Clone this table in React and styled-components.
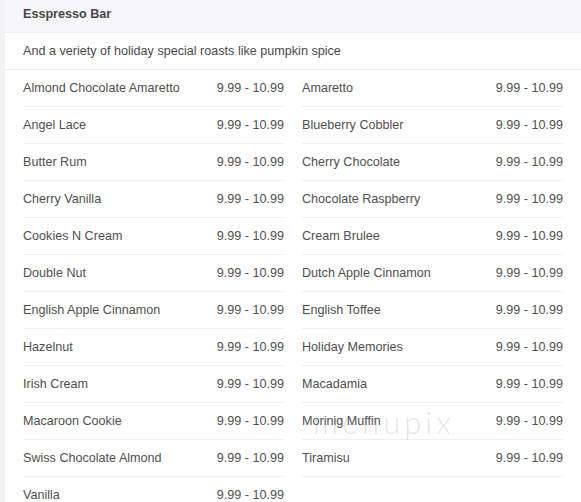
import React from "react";
import styled, { createGlobalStyle } from "styled-components";

const GlobalStyle = createGlobalStyle`
  body {
    margin: 0;
    background: #ffffff;
    font-family: "Liberation Sans", Arial, sans-serif;
  }
`;

const Page = styled.div`
  position: relative;
  border-left: 5px solid #f2f2f4;
  min-height: 502px;
  background: #fff;
`;

const Header = styled.div`
  background: #f6f6f9;
  height: 33px;
  box-sizing: border-box;
  display: flex;
  align-items: center;
  padding: 0 18px 4px;
  border-bottom: 1px solid #ececf0;
  font-size: 12.6px;
  font-weight: bold;
  color: #474747;
`;

const Description = styled.div`
  height: 36px;
  display: flex;
  align-items: center;
  padding: 0 18px;
  border-bottom: 1px solid #ececf0;
  font-size: 12.6px;
  color: #4a4a4a;
`;

const Grid = styled.div`
  display: grid;
  grid-template-columns: 1fr 1fr;
  column-gap: 18px;
  padding: 0 18px;
`;

const Column = styled.div`
  display: flex;
  flex-direction: column;
`;

const Row = styled.div`
  height: 36px;
  display: flex;
  align-items: center;
  justify-content: space-between;
  border-bottom: 1px solid #efeff2;
  font-size: 12.6px;
  color: #505050;
`;

const Name = styled.span``;
const Price = styled.span``;

const Watermark = styled.div`
  position: absolute;
  left: 308px;
  top: 403px;
  font-family: Lato, "Liberation Sans", sans-serif;
  font-size: 31px;
  font-weight: 300;
  letter-spacing: 4px;
  color: rgba(130, 130, 130, 0.22);
  pointer-events: none;
`;

const left = [
  "Almond Chocolate Amaretto",
  "Angel Lace",
  "Butter Rum",
  "Cherry Vanilla",
  "Cookies N Cream",
  "Double Nut",
  "English Apple Cinnamon",
  "Hazelnut",
  "Irish Cream",
  "Macaroon Cookie",
  "Swiss Chocolate Almond",
  "Vanilla",
];

const right = [
  "Amaretto",
  "Blueberry Cobbler",
  "Cherry Chocolate",
  "Chocolate Raspberry",
  "Cream Brulee",
  "Dutch Apple Cinnamon",
  "English Toffee",
  "Holiday Memories",
  "Macadamia",
  "Morinig Muffin",
  "Tiramisu",
];

export default function App() {
  return (
    <Page>
      <GlobalStyle />
      <Header>Esspresso Bar</Header>
      <Description>And a veriety of holiday special roasts like pumpkin spice</Description>
      <Grid>
        {[left, right].map((items, i) => (
          <Column key={i}>
            {items.map((name) => (
              <Row key={name}>
                <Name>{name}</Name>
                <Price>9.99 - 10.99</Price>
              </Row>
            ))}
          </Column>
        ))}
      </Grid>
      <Watermark>menupix</Watermark>
    </Page>
  );
}
